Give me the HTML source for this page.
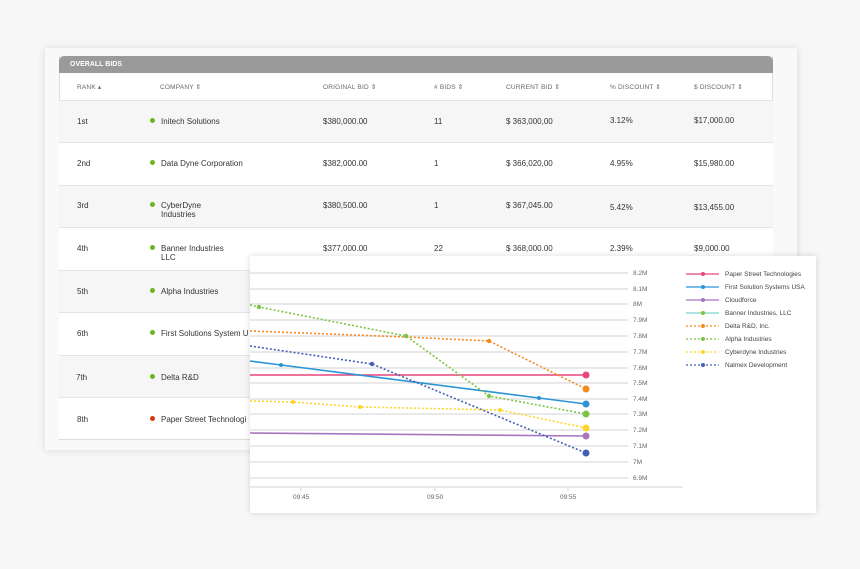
<!DOCTYPE html>
<html><head><meta charset="utf-8"><style>
*{margin:0;padding:0;box-sizing:border-box}
body{width:860px;height:569px;background:#f7f7f7;position:relative;overflow:hidden;font-family:"Liberation Sans",sans-serif;color:#333}
.panel{position:absolute;left:45px;top:48px;width:752px;height:402px;background:#f9f9f9;box-shadow:0 0 8px rgba(0,0,0,.12)}
.tbl{position:absolute;left:59px;top:56px;width:714px;height:384px;background:#fff;border:1px solid #ddd;border-top:none}
.hb{position:absolute;left:59px;top:56px;width:714px;height:17px;background:#9a9a9a;border-radius:5px 5px 0 0;color:#fff;font-size:7px;font-weight:bold;padding:5px 0 0 11px}
.t{position:absolute;font-size:8px;white-space:nowrap;line-height:9px}
.h{position:absolute;font-size:6.5px;color:#666;top:83px;white-space:nowrap;letter-spacing:.2px}
.row{position:absolute;left:59px;width:714px;border-top:1px solid #e4e4e4}
.dot{position:absolute;width:5px;height:5px;border-radius:50%}
.chart{position:absolute;left:250px;top:256px;width:566px;height:257px;background:#fff;box-shadow:0 0 6px rgba(0,0,0,.15)}
</style></head><body>
<div class="panel"></div>
<div class="tbl"></div>
<div class="row" style="top:100px;height:42px;background:#f6f6f6"></div>
<div class="row" style="top:142px;height:43px;background:#fff"></div>
<div class="row" style="top:185px;height:42px;background:#f6f6f6"></div>
<div class="row" style="top:227px;height:43px;background:#fff"></div>
<div class="row" style="top:270px;height:42px;background:#f6f6f6"></div>
<div class="row" style="top:312px;height:43px;background:#fff"></div>
<div class="row" style="top:355px;height:42px;background:#f6f6f6"></div>
<div class="row" style="top:397px;height:43px;background:#fff;border-bottom:1px solid #ddd"></div>
<div class="hb">OVERALL BIDS</div>
<div class="h" style="left:77px">RANK ▴</div>
<div class="h" style="left:160px">COMPANY ⇕</div>
<div class="h" style="left:323px">ORIGINAL BID ⇕</div>
<div class="h" style="left:434px"># BIDS ⇕</div>
<div class="h" style="left:506px">CURRENT BID ⇕</div>
<div class="h" style="left:610px">% DISCOUNT ⇕</div>
<div class="h" style="left:694px">$ DISCOUNT ⇕</div>

<div class="t" style="left:77px;top:117px">1st</div><div class="dot" style="left:150px;top:118px;background:#6cb520"></div><div class="t" style="left:161px;top:117px">Initech Solutions</div><div class="t" style="left:323px;top:117px">$380,000.00</div><div class="t" style="left:434px;top:117px">11</div><div class="t" style="left:506px;top:117px">$ 363,000,00</div><div class="t" style="left:610px;top:116px">3.12%</div><div class="t" style="left:694px;top:116px">$17,000.00</div>
<div class="t" style="left:77px;top:159px">2nd</div><div class="dot" style="left:150px;top:160px;background:#6cb520"></div><div class="t" style="left:161px;top:159px">Data Dyne Corporation</div><div class="t" style="left:323px;top:159px">$382,000.00</div><div class="t" style="left:434px;top:159px">1</div><div class="t" style="left:506px;top:159px">$ 366,020,00</div><div class="t" style="left:610px;top:159px">4.95%</div><div class="t" style="left:694px;top:159px">$15,980.00</div>
<div class="t" style="left:77px;top:201px">3rd</div><div class="dot" style="left:150px;top:202px;background:#6cb520"></div><div class="t" style="left:161px;top:201px">CyberDyne<br>Industries</div><div class="t" style="left:323px;top:201px">$380,500.00</div><div class="t" style="left:434px;top:201px">1</div><div class="t" style="left:506px;top:201px">$ 367,045.00</div><div class="t" style="left:610px;top:203px">5.42%</div><div class="t" style="left:694px;top:203px">$13,455.00</div>
<div class="t" style="left:77px;top:244px">4th</div><div class="dot" style="left:150px;top:245px;background:#6cb520"></div><div class="t" style="left:161px;top:244px">Banner Industries<br>LLC</div><div class="t" style="left:323px;top:244px">$377,000.00</div><div class="t" style="left:434px;top:244px">22</div><div class="t" style="left:506px;top:244px">$ 368,000.00</div><div class="t" style="left:610px;top:244px">2.39%</div><div class="t" style="left:694px;top:244px">$9,000.00</div>
<div class="t" style="left:77px;top:287px">5th</div><div class="dot" style="left:150px;top:288px;background:#6cb520"></div><div class="t" style="left:161px;top:287px">Alpha Industries</div>
<div class="t" style="left:77px;top:329px">6th</div><div class="dot" style="left:150px;top:330px;background:#6cb520"></div><div class="t" style="left:161px;top:329px">First Solutions System U</div>
<div class="t" style="left:76px;top:373px">7th</div><div class="dot" style="left:150px;top:374px;background:#6cb520"></div><div class="t" style="left:161px;top:373px">Delta R&amp;D</div>
<div class="t" style="left:77px;top:415px">8th</div><div class="dot" style="left:150px;top:416px;background:#d33a10"></div><div class="t" style="left:161px;top:415px">Paper Street Technologi</div>

<div class="chart">
<svg width="566" height="257" viewBox="250 256 566 257" style="font-family:'Liberation Sans',sans-serif">
<g stroke="#dcdcdc" stroke-width="1.2">
<line x1="250" x2="628" y1="273" y2="273"/><line x1="250" x2="628" y1="289" y2="289"/><line x1="250" x2="628" y1="304" y2="304"/><line x1="250" x2="628" y1="320" y2="320"/><line x1="250" x2="628" y1="336" y2="336"/><line x1="250" x2="628" y1="352" y2="352"/><line x1="250" x2="628" y1="368" y2="368"/><line x1="250" x2="628" y1="383" y2="383"/><line x1="250" x2="628" y1="399" y2="399"/><line x1="250" x2="628" y1="414" y2="414"/><line x1="250" x2="628" y1="430" y2="430"/><line x1="250" x2="628" y1="446" y2="446"/><line x1="250" x2="628" y1="462" y2="462"/><line x1="250" x2="628" y1="478" y2="478"/>
<line x1="250" x2="683" y1="487" y2="487"/><line x1="301" x2="301" y1="487" y2="491"/><line x1="435" x2="435" y1="487" y2="491"/><line x1="568" x2="568" y1="487" y2="491"/>
</g>
<g font-size="6.5" fill="#666">
<text x="633" y="275">8.2M</text><text x="633" y="291">8.1M</text><text x="633" y="306">8M</text><text x="633" y="322">7.9M</text><text x="633" y="338">7.8M</text><text x="633" y="354">7.7M</text><text x="633" y="370">7.6M</text><text x="633" y="385">7.5M</text><text x="633" y="401">7.4M</text><text x="633" y="416">7.3M</text><text x="633" y="432">7.2M</text><text x="633" y="448">7.1M</text><text x="633" y="464">7M</text><text x="633" y="480">6.9M</text>
<text x="293" y="499">09:45</text><text x="427" y="499">09:50</text><text x="560" y="499">09:55</text>
</g>
<g fill="none" stroke-width="1.6">
<polyline stroke="#e8457a" points="250,375 586,375"/>
<polyline stroke="#2a94d6" points="250,361 281,365 539,398 586,404"/>
<polyline stroke="#a774c0" points="250,433 586,436"/>
<polyline stroke="#7cc444" stroke-dasharray="2,2" points="250,305 259,307 406,336 489,396 586,414"/>
<polyline stroke="#f58a1f" stroke-dasharray="2,2" points="250,331 406,337 489,341 586,389"/>
<polyline stroke="#4360b5" stroke-dasharray="2,2" points="250,346 372,364 586,453"/>
<polyline stroke="#fcd52c" stroke-dasharray="2,2" points="250,401 293,402 360,407 500,410 586,428"/>
</g>
<g>
<circle cx="586" cy="375" r="3.5" fill="#e8457a"/>
<circle cx="281" cy="365" r="2" fill="#2a94d6"/><circle cx="539" cy="398" r="2" fill="#2a94d6"/><circle cx="586" cy="404" r="3.5" fill="#2a94d6"/>
<circle cx="586" cy="436" r="3.5" fill="#a774c0"/>
<circle cx="259" cy="307" r="2.2" fill="#7cc444"/><circle cx="406" cy="336" r="2.2" fill="#7cc444"/><circle cx="489" cy="396" r="2.2" fill="#7cc444"/><circle cx="586" cy="414" r="3.5" fill="#7cc444"/>
<circle cx="489" cy="341" r="2.2" fill="#f58a1f"/><circle cx="586" cy="389" r="3.5" fill="#f58a1f"/>
<circle cx="372" cy="364" r="2.2" fill="#4360b5"/><circle cx="586" cy="453" r="3.5" fill="#4360b5"/>
<circle cx="293" cy="402" r="2" fill="#fcd52c"/><circle cx="360" cy="407" r="2" fill="#fcd52c"/><circle cx="500" cy="410" r="2" fill="#fcd52c"/><circle cx="586" cy="428" r="3.5" fill="#fcd52c"/>
</g>
<g stroke-width="1.2" font-size="6.5" fill="#444">
<line x1="686" x2="719" y1="274" y2="274" stroke="#e8457a"/><circle cx="703" cy="274" r="2" fill="#e8457a"/><text x="725" y="276" stroke="none">Paper Street Technologies</text>
<line x1="686" x2="719" y1="287" y2="287" stroke="#2a94d6"/><circle cx="703" cy="287" r="2" fill="#2a94d6"/><text x="725" y="289" stroke="none">First Solution Systems USA</text>
<line x1="686" x2="719" y1="300" y2="300" stroke="#a774c0"/><circle cx="703" cy="300" r="2" fill="#a774c0"/><text x="725" y="302" stroke="none">Cloudforce</text>
<line x1="686" x2="719" y1="313" y2="313" stroke="#7fd3c8"/><circle cx="703" cy="313" r="2" fill="#7cc444"/><text x="725" y="315" stroke="none">Banner Industries, LLC</text>
<line x1="686" x2="719" y1="326" y2="326" stroke="#f58a1f" stroke-dasharray="2,2"/><circle cx="703" cy="326" r="2" fill="#f58a1f"/><text x="725" y="328" stroke="none">Delta R&amp;D, Inc.</text>
<line x1="686" x2="719" y1="339" y2="339" stroke="#7cc444" stroke-dasharray="2,2"/><circle cx="703" cy="339" r="2" fill="#7cc444"/><text x="725" y="341" stroke="none">Alpha Industries</text>
<line x1="686" x2="719" y1="352" y2="352" stroke="#fcd52c" stroke-dasharray="2,2"/><circle cx="703" cy="352" r="2" fill="#fcd52c"/><text x="725" y="354" stroke="none">Cyberdyne Industries</text>
<line x1="686" x2="719" y1="365" y2="365" stroke="#4360b5" stroke-dasharray="2,2"/><circle cx="703" cy="365" r="2" fill="#4360b5"/><text x="725" y="367" stroke="none">Nalmex Development</text>
</g>
</svg>
</div>
</body></html>
